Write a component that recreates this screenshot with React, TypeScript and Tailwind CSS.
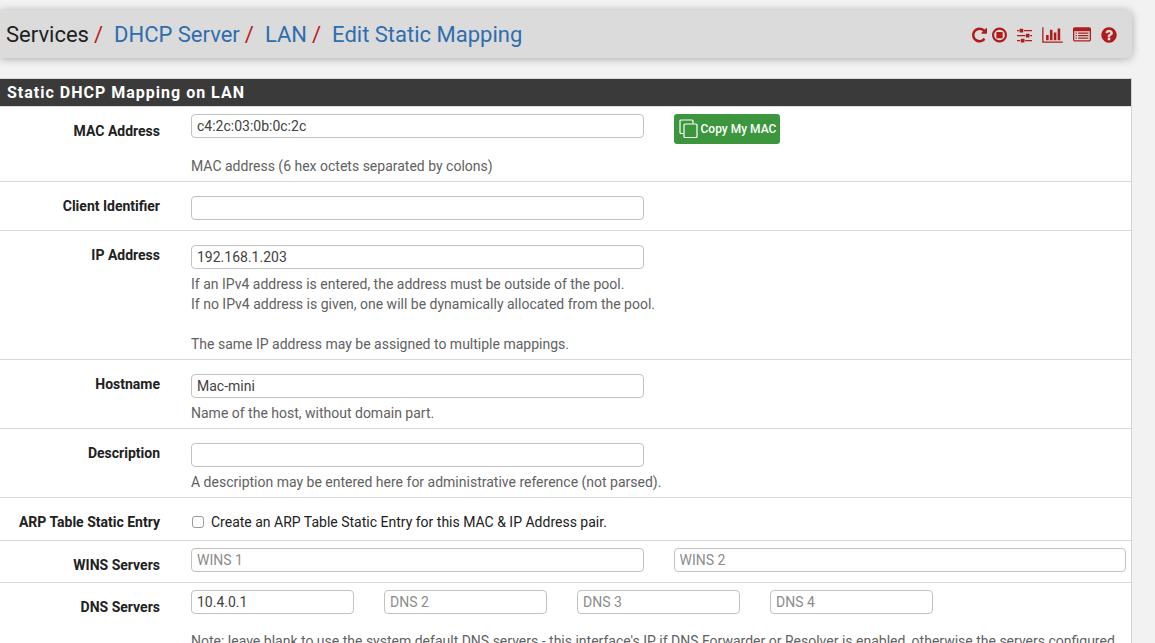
import React, { ReactNode } from 'react';

interface FormRowProps {
  label: string;
  htmlFor: string;
  className?: string;
  children: ReactNode;
}

const FormRow = ({ label, htmlFor, className = '', children }: FormRowProps) => (
  <div className="flex gap-[31px] border-b border-[#d9d9d9] pr-[5px]">
    <label htmlFor={htmlFor} className="w-40 shrink-0 pt-3.5 text-right font-bold text-[#212121]">
      {label}
    </label>
    <div className={`min-w-0 flex-1 ${className}`}>{children}</div>
  </div>
);

const TextInput = (props: React.InputHTMLAttributes<HTMLInputElement>) => (
  <input
    type="text"
    className="block h-6 w-full min-w-0 rounded-[4px] border border-[#c2c2c2] bg-white px-[5px] text-[#424242] placeholder:text-[#8c8c8c]"
    {...props}
  />
);

const HelpText = ({ className = 'mt-[5px]', children }: { className?: string; children: ReactNode }) => (
  <p className={`text-[#616161] ${className}`}>{children}</p>
);

const Columns = ({ children }: { children: ReactNode }) => (
  <div className="grid grid-cols-2 gap-[30px]">{children}</div>
);

const Slash = () => <span className="mr-[11px] ml-[5px] text-[#b71c1c]">/</span>;

const RestartIcon = () => (
  <svg className="h-[18px] w-[15px]" viewBox="128 0 1536 1792" fill="currentColor">
    <path d="M1664 256v448q0 26-19 45t-45 19h-448q-42 0-59-40-17-39 14-69l138-138q-148-137-349-137-104 0-198.5 40.5t-163.5 109.5-109.5 163.5-40.5 198.5 40.5 198.5 109.5 163.5 163.5 109.5 198.5 40.5q119 0 225-52t179-147q7-10 23-12 15 0 25 9l137 138q9 8 9.5 20.500t-7.500 22.500q-109 132-264 204.500t-327 72.500q-156 0-298-61t-245-164-164-245-61-298 61-298 164-245 245-164 298-61q147 0 284.500 55.500t244.500 156.500l130-129q29-31 70-14 39 17 39 59z" />
  </svg>
);

const StopIcon = () => (
  <svg className="h-[18px] w-[15px]" viewBox="128 0 1536 1792" fill="currentColor">
    <path d="M896 128q209 0 385.500 103t279.500 279.500 103 385.500-103 385.500-279.500 279.500-385.500 103-385.500-103-279.500-279.500-103-385.500 103-385.500 279.500-279.500 385.500-103zm0 1312q148 0 273-73t198-198 73-273-73-273-198-198-273-73-273 73-198 198-73 273 73 273 198 198 273 73zm-288-224q-14 0-23-9t-9-23v-576q0-14 9-23t23-9h576q14 0 23 9t9 23v576q0 14-9 23t-23 9z" />
  </svg>
);

const SlidersIcon = () => (
  <svg className="h-[18px] w-[15px]" viewBox="128 0 1536 1792" fill="currentColor">
    <path d="M128 384h192v128H128zM832 384h832v128H832zM128 896h832v128H128zM1472 896h192v128h-192zM128 1408h320v128H128zM960 1408h704v128H960z" />
    <rect x="384" y="256" width="384" height="384" rx="64" />
    <rect x="1024" y="768" width="384" height="384" rx="64" />
    <rect x="512" y="1280" width="384" height="384" rx="64" />
  </svg>
);

const ChartIcon = () => (
  <svg className="h-[18px] w-[21px]" viewBox="0 0 2048 1792" fill="currentColor">
    <path d="M640 896v512h-256v-512h256zm384-512v1024h-256v-1024h256zm1024 1152v128h-2048v-1536h128v1408h1920zm-640-896v768h-256v-768h256zm384-384v1152h-256v-1152h256z" />
  </svg>
);

const ListIcon = () => (
  <svg className="h-[18px] w-[18px]" viewBox="0 0 1792 1792" fill="currentColor">
    <path
      fillRule="evenodd"
      d="M160 128h1472q66 0 113 47t47 113v1088q0 66-47 113t-113 47H160q-66 0-113-47t-47-113V288q0-66 47-113t113-47zM128 512v864q0 32 32 32h1472q32 0 32-32V512z"
    />
    <path d="M256 640h128v128H256zM256 896h128v128H256zM256 1152h128v128H256zM512 640h1024v128H512zM512 896h1024v128H512zM512 1152h1024v128H512z" />
  </svg>
);

const HelpIcon = () => (
  <svg className="h-[18px] w-4" viewBox="128 0 1536 1792" fill="currentColor">
    <path d="M1024 1376v-192q0-14-9-23t-23-9h-192q-14 0-23 9t-9 23v192q0 14 9 23t23 9h192q14 0 23-9t9-23zm256-672q0-88-55.500-163t-138.500-116-170-41q-243 0-371 213-15 24 8 42l132 100q7 6 19 6 16 0 25-12 53-68 86-92 34-24 86-24 48 0 85.500 26t37.500 59q0 38-20 61t-68 45q-63 28-115.500 86.500t-52.500 125.500v36q0 14 9 23t23 9h192q14 0 23-9t9-23q0-19 21.500-49.500t54.500-49.500q32-18 49-28.500t46-35 44.500-48 28-60.500 12.500-81zm384 192q0 209-103 385.500t-279.500 279.500-385.500 103-385.500-103-279.500-279.500-103-385.500 103-385.500 279.500-279.500 385.500-103 385.500 103 279.500 279.500 103 385.500z" />
  </svg>
);

const CopyIcon = () => (
  <svg className="h-5 w-5" viewBox="0 0 20 20" fill="none" stroke="currentColor" strokeWidth="1.2">
    <path d="M4.500 14.500H2A1 1 0 0 1 1 13.500V2A1 1 0 0 1 2 1H13A1 1 0 0 1 14 2V4.500" />
    <rect x="5" y="5" width="13" height="13.500" rx="1" />
  </svg>
);

const App = () => (
  <div className="h-screen overflow-hidden bg-[#f2f2f2] pt-2.5 pr-[23px] font-[Roboto,sans-serif] text-sm">
    <header className="flex h-12 items-center justify-between rounded-r-md bg-[#dbdbdb] pt-0.5 pr-[15px] pl-1.5 shadow-[0_1px_8px_rgba(0,0,0,0.3)]">
      <nav aria-label="Breadcrumb" className="text-[22px] leading-7 whitespace-nowrap text-[#212121]">
        Services
        <Slash />
        <a href="#dhcp" className="text-[#2f6ead]">DHCP Server</a>
        <Slash />
        <a href="#lan" className="text-[#2f6ead]">LAN</a>
        <Slash />
        <a href="#edit" className="text-[#2f6ead]">Edit Static Mapping</a>
      </nav>
      <div className="flex items-center gap-2.5 text-[#b01c1c]">
        <div className="flex gap-[5px]">
          <a href="#restart" aria-label="Restart service"><RestartIcon /></a>
          <a href="#stop" aria-label="Stop service"><StopIcon /></a>
        </div>
        <a href="#settings" aria-label="Related settings"><SlidersIcon /></a>
        <a href="#status" aria-label="Related status"><ChartIcon /></a>
        <a href="#logs" aria-label="Related log entries"><ListIcon /></a>
        <a href="#help" aria-label="Help"><HelpIcon /></a>
      </div>
    </header>

    <form className="mt-5 border-t border-r border-[#d4d4d4] bg-white">
      <h2 className="border-b border-[#d9d9d9] bg-[#3a3a3a] pl-[7px] text-base leading-[27px] font-bold tracking-[1px] text-white">
        Static DHCP Mapping on LAN
      </h2>

      <FormRow label="MAC Address" htmlFor="mac" className="pt-[7px] pb-[5px]">
        <Columns>
          <TextInput id="mac" defaultValue="c4:2c:03:0b:0c:2c" />
          <button
            type="button"
            className="flex h-[30px] items-center gap-0.5 justify-self-start rounded-[3px] bg-[#3b963e] pr-1 pl-[5px] text-xs font-medium whitespace-nowrap text-white"
          >
            <CopyIcon />
            Copy My MAC
          </button>
        </Columns>
        <HelpText className="mt-3">MAC address (6 hex octets separated by colons)</HelpText>
      </FormRow>

      <FormRow label="Client Identifier" htmlFor="cid" className="pt-3.5 pb-2.5">
        <Columns>
          <TextInput id="cid" />
        </Columns>
      </FormRow>

      <FormRow label="IP Address" htmlFor="ipaddr" className="pt-3.5 pb-[5px]">
        <Columns>
          <TextInput id="ipaddr" defaultValue="192.168.1.203" />
        </Columns>
        <HelpText>
          If an IPv4 address is entered, the address must be outside of the pool.
          <br />
          If no IPv4 address is given, one will be dynamically allocated from the pool.
          <br />
          <br />
          The same IP address may be assigned to multiple mappings.
        </HelpText>
      </FormRow>

      <FormRow label="Hostname" htmlFor="hostname" className="pt-3.5 pb-[5px]">
        <Columns>
          <TextInput id="hostname" defaultValue="Mac-mini" />
        </Columns>
        <HelpText>Name of the host, without domain part.</HelpText>
      </FormRow>

      <FormRow label="Description" htmlFor="descr" className="pt-3.5 pb-[5px]">
        <Columns>
          <TextInput id="descr" />
        </Columns>
        <HelpText>A description may be entered here for administrative reference (not parsed).</HelpText>
      </FormRow>

      <FormRow label="ARP Table Static Entry" htmlFor="arp" className="pt-3.5 pb-2">
        <div className="flex items-center gap-[7px] text-[#212121]">
          <input
            id="arp"
            type="checkbox"
            className="ml-px h-3 w-3 appearance-none rounded-[3px] border border-[#9a9a9a] bg-white checked:bg-[#2f6ead]"
          />
          <label htmlFor="arp">Create an ARP Table Static Entry for this MAC &amp; IP Address pair.</label>
        </div>
      </FormRow>

      <FormRow label="WINS Servers" htmlFor="wins1" className="pt-[7px] pb-2.5">
        <Columns>
          <TextInput id="wins1" placeholder="WINS 1" />
          <TextInput aria-label="WINS 2" placeholder="WINS 2" />
        </Columns>
      </FormRow>

      <FormRow label="DNS Servers" htmlFor="dns1" className="pt-[7px] pb-[5px]">
        <div className="grid grid-cols-5 gap-[30px]">
          <TextInput id="dns1" defaultValue="10.4.0.1" />
          <TextInput aria-label="DNS 2" placeholder="DNS 2" />
          <TextInput aria-label="DNS 3" placeholder="DNS 3" />
          <TextInput aria-label="DNS 4" placeholder="DNS 4" />
        </div>
        <HelpText className="mt-[17px]">
          Note: leave blank to use the system default DNS servers - this interface's IP if DNS Forwarder or Resolver is enabled, otherwise the servers configured
        </HelpText>
      </FormRow>
    </form>
  </div>
);

export default App;
